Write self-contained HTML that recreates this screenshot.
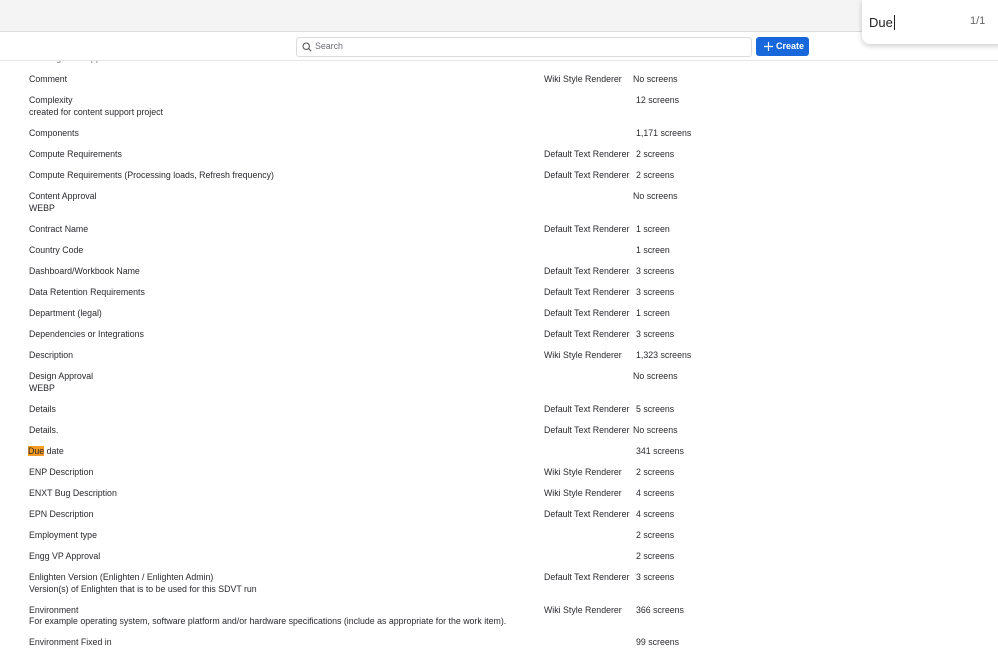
<!DOCTYPE html>
<html><head><meta charset="utf-8"><style>
body{margin:0;width:998px;height:642px;overflow:hidden;background:#fff;font-family:"Liberation Sans",sans-serif;color:#292a2e;font-size:8.8px;position:relative}
.t{position:absolute;white-space:nowrap;line-height:11px;margin-top:1px}
.top{position:absolute;left:0;top:0;width:998px;height:31px;background:#f4f4f4;border-bottom:1px solid #dcdcdc}
.hdr{position:absolute;left:0;top:32px;width:998px;height:28px;background:#fff;border-bottom:1px solid #e6e6e6}
.search{position:absolute;left:296px;top:37px;width:454px;height:18px;border:1px solid #dcdcdc;border-radius:3px;background:#fff}
.btn{position:absolute;left:756px;top:37px;width:53px;height:19px;background:#1868db;border-radius:3px;color:#fff;font-weight:bold;font-size:9px;line-height:19px}
.find{position:absolute;left:862px;top:0;width:140px;height:44px;background:#fff;border-radius:0 0 0 8px;box-shadow:0 2px 6px rgba(0,0,0,.2)}
.hl{background:#f59a23}
</style></head><body>
<div class="t" style="left:29px;top:52px;color:#777">Working with support</div>
<div class="top"></div>
<div class="hdr"></div>
<div class="search"><svg style="position:absolute;left:5px;top:4px" width="10" height="10" viewBox="0 0 10 10"><circle cx="4.2" cy="4.2" r="3.2" fill="none" stroke="#555" stroke-width="1.1"/><path d="M6.6 6.6L9.2 9.2" stroke="#555" stroke-width="1.1"/></svg><span class="t" style="left:18px;top:2px;color:#6b6e76">Search</span></div>
<div class="btn"><svg style="position:absolute;left:8px;top:5px" width="9" height="9" viewBox="0 0 9 9"><path d="M4.5 0V9M0 4.5H9" stroke="#fff" stroke-width="1.2"/></svg><span style="position:absolute;left:20px">Create</span></div>
<div class="find"><span class="t" style="left:7px;top:14px;font-size:13px;line-height:15px;color:#222">Due<span style="border-left:1px solid #222;margin-left:1px"></span></span><span class="t" style="left:108px;top:15px;font-size:11px;color:#666">1/1</span></div>

<div class="t" style="left:29px;top:73px">Comment</div><div class="t" style="left:544px;top:73px">Wiki Style Renderer</div><div class="t" style="left:633px;top:73px">No screens</div>
<div class="t" style="left:29px;top:94px">Complexity</div><div class="t" style="left:29px;top:106px">created for content support project</div><div class="t" style="left:636px;top:94px">12 screens</div>
<div class="t" style="left:29px;top:127px">Components</div><div class="t" style="left:636px;top:127px">1,171 screens</div>
<div class="t" style="left:29px;top:148px">Compute Requirements</div><div class="t" style="left:544px;top:148px">Default Text Renderer</div><div class="t" style="left:636px;top:148px">2 screens</div>
<div class="t" style="left:29px;top:169px">Compute Requirements (Processing loads, Refresh frequency)</div><div class="t" style="left:544px;top:169px">Default Text Renderer</div><div class="t" style="left:636px;top:169px">2 screens</div>
<div class="t" style="left:29px;top:190px">Content Approval</div><div class="t" style="left:29px;top:202px">WEBP</div><div class="t" style="left:633px;top:190px">No screens</div>
<div class="t" style="left:29px;top:223px">Contract Name</div><div class="t" style="left:544px;top:223px">Default Text Renderer</div><div class="t" style="left:636px;top:223px">1 screen</div>
<div class="t" style="left:29px;top:244px">Country Code</div><div class="t" style="left:636px;top:244px">1 screen</div>
<div class="t" style="left:29px;top:265px">Dashboard/Workbook Name</div><div class="t" style="left:544px;top:265px">Default Text Renderer</div><div class="t" style="left:636px;top:265px">3 screens</div>
<div class="t" style="left:29px;top:286px">Data Retention Requirements</div><div class="t" style="left:544px;top:286px">Default Text Renderer</div><div class="t" style="left:636px;top:286px">3 screens</div>
<div class="t" style="left:29px;top:307px">Department (legal)</div><div class="t" style="left:544px;top:307px">Default Text Renderer</div><div class="t" style="left:636px;top:307px">1 screen</div>
<div class="t" style="left:29px;top:328px">Dependencies or Integrations</div><div class="t" style="left:544px;top:328px">Default Text Renderer</div><div class="t" style="left:636px;top:328px">3 screens</div>
<div class="t" style="left:29px;top:349px">Description</div><div class="t" style="left:544px;top:349px">Wiki Style Renderer</div><div class="t" style="left:636px;top:349px">1,323 screens</div>
<div class="t" style="left:29px;top:370px">Design Approval</div><div class="t" style="left:29px;top:382px">WEBP</div><div class="t" style="left:633px;top:370px">No screens</div>
<div class="t" style="left:29px;top:403px">Details</div><div class="t" style="left:544px;top:403px">Default Text Renderer</div><div class="t" style="left:636px;top:403px">5 screens</div>
<div class="t" style="left:29px;top:424px">Details.</div><div class="t" style="left:544px;top:424px">Default Text Renderer</div><div class="t" style="left:633px;top:424px">No screens</div>
<div class="t" style="left:28px;top:445px"><span class="hl">Due</span> date</div><div class="t" style="left:636px;top:445px">341 screens</div>
<div class="t" style="left:29px;top:466px">ENP Description</div><div class="t" style="left:544px;top:466px">Wiki Style Renderer</div><div class="t" style="left:636px;top:466px">2 screens</div>
<div class="t" style="left:29px;top:487px">ENXT Bug Description</div><div class="t" style="left:544px;top:487px">Wiki Style Renderer</div><div class="t" style="left:636px;top:487px">4 screens</div>
<div class="t" style="left:29px;top:508px">EPN Description</div><div class="t" style="left:544px;top:508px">Default Text Renderer</div><div class="t" style="left:636px;top:508px">4 screens</div>
<div class="t" style="left:29px;top:529px">Employment type</div><div class="t" style="left:636px;top:529px">2 screens</div>
<div class="t" style="left:29px;top:550px">Engg VP Approval</div><div class="t" style="left:636px;top:550px">2 screens</div>
<div class="t" style="left:29px;top:571px">Enlighten Version (Enlighten / Enlighten Admin)</div><div class="t" style="left:29px;top:583px">Version(s) of Enlighten that is to be used for this SDVT run</div><div class="t" style="left:544px;top:571px">Default Text Renderer</div><div class="t" style="left:636px;top:571px">3 screens</div>
<div class="t" style="left:29px;top:604px">Environment</div><div class="t" style="left:29px;top:615px">For example operating system, software platform and/or hardware specifications (include as appropriate for the work item).</div><div class="t" style="left:544px;top:604px">Wiki Style Renderer</div><div class="t" style="left:636px;top:604px">366 screens</div>
<div class="t" style="left:29px;top:636px">Environment Fixed in</div><div class="t" style="left:636px;top:636px">99 screens</div>
</body></html>
